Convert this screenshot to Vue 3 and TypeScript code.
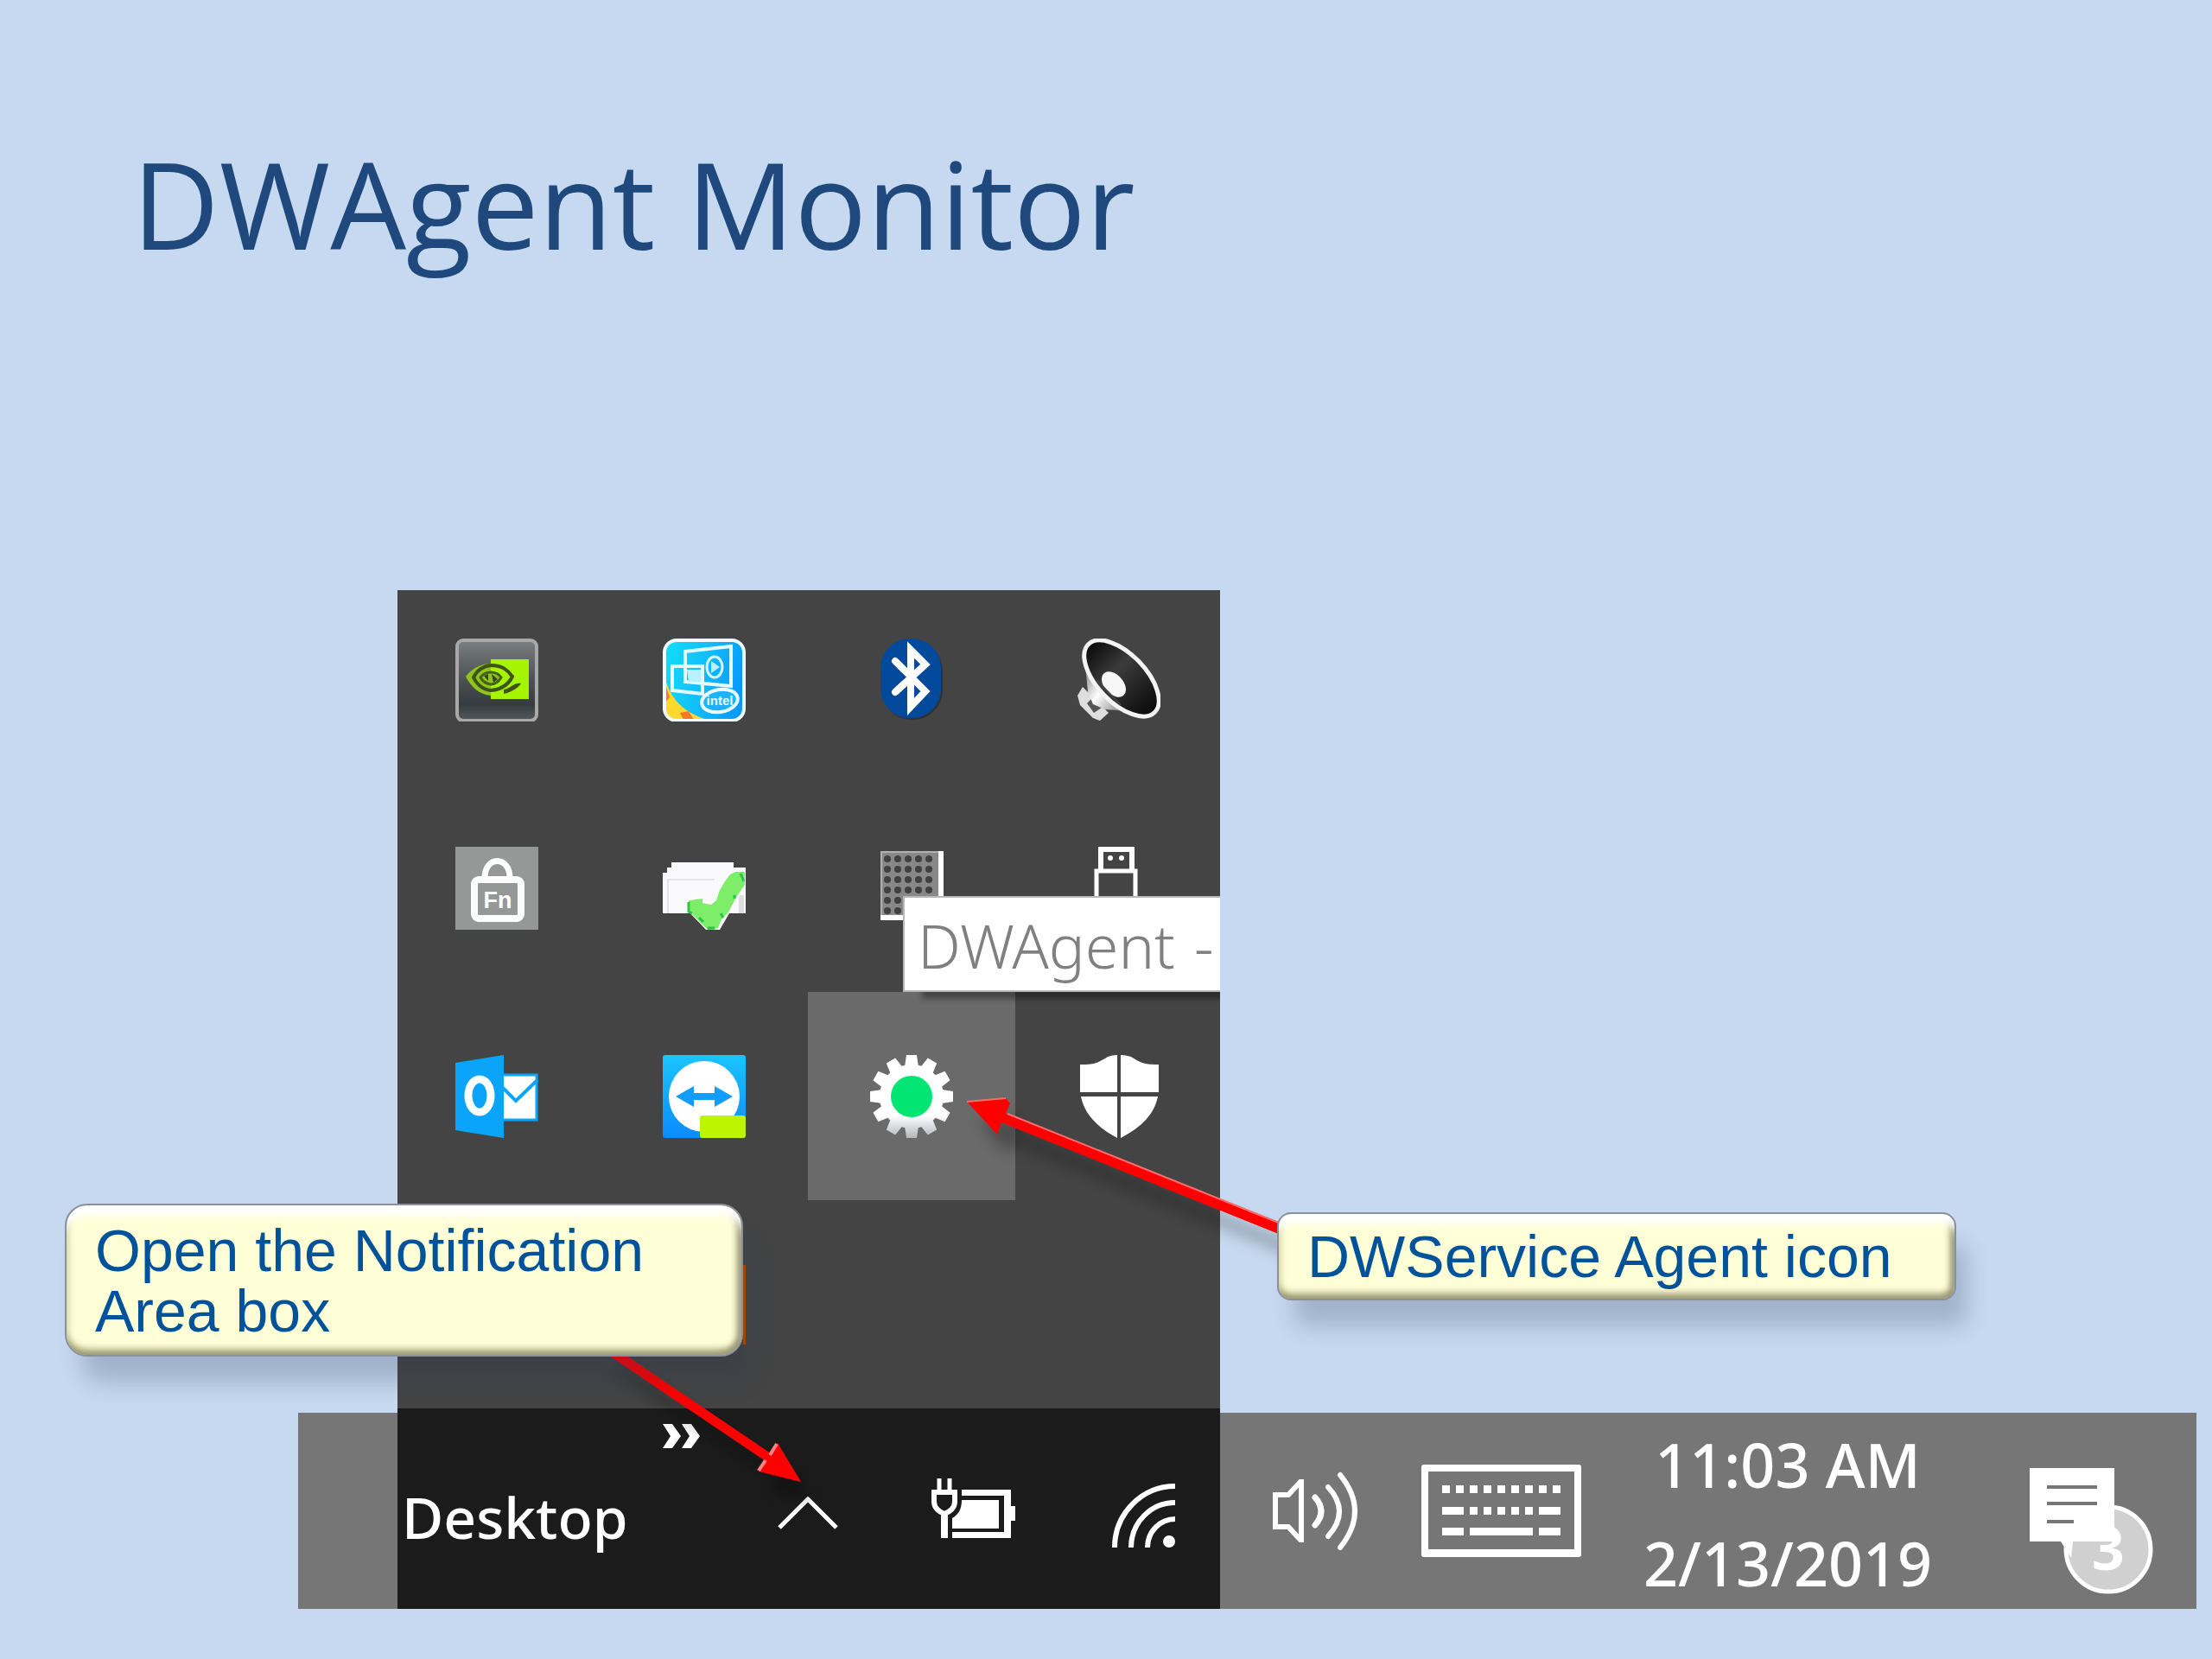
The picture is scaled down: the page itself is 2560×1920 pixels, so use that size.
<script setup lang="ts">
interface TrayItem {
  id: string
  label: string
  selected?: boolean
}

const trayItems: TrayItem[] = [
  { id: 'nvidia', label: 'NVIDIA Settings' },
  { id: 'intel', label: 'Intel Graphics' },
  { id: 'bluetooth', label: 'Bluetooth' },
  { id: 'speaker', label: 'Audio Manager' },
  { id: 'fnlock', label: 'Fn Lock' },
  { id: 'sync', label: 'Documents up to date' },
  { id: 'touchpad', label: 'Touchpad' },
  { id: 'usb', label: 'Safely Remove Hardware' },
  { id: 'outlook', label: 'Outlook' },
  { id: 'teamviewer', label: 'TeamViewer' },
  { id: 'dwagent', label: 'DWAgent', selected: true },
  { id: 'defender', label: 'Windows Defender' },
]

const gearTeeth = Array.from({ length: 12 }, (_, i) => i * 30)
const padDots = Array.from({ length: 30 }, (_, i) => ({
  x: 20 + (i % 5) * 12,
  y: 14 + Math.floor(i / 5) * 12,
}))
const keyRow = Array.from({ length: 9 }, (_, i) => 24 + i * 16)
const shortKeyRow = Array.from({ length: 5 }, (_, i) => 56 + i * 16)
</script>

<template>
  <main class="slide">
    <h1 class="title">DWAgent Monitor</h1>

    <section class="stage">
      <div class="flyout">
        <div class="tray">
          <button
            v-for="item in trayItems"
            :key="item.id"
            type="button"
            class="tray-cell"
            :class="{ selected: item.selected }"
            :aria-label="item.label"
          >
            <svg v-if="item.id === 'nvidia'" class="tray-icon" viewBox="0 0 96 96">
              <defs>
                <linearGradient id="nv" x1="0" y1="0" x2="0" y2="1">
                  <stop offset="0" stop-color="#7b7f81" />
                  <stop offset="0.5" stop-color="#4b5053" />
                  <stop offset="0.8" stop-color="#363b3f" />
                  <stop offset="1" stop-color="#555a5d" />
                </linearGradient>
              </defs>
              <rect x="2" y="2" width="92" height="93" rx="7" fill="url(#nv)" stroke="#a6a8aa" stroke-width="4" />
              <path d="M41 24H85V70H41Z" fill="#a6f500" />
              <path d="M41 29C28 29 18 36 12 44C18 56 28 65 41 66Z" fill="#8fc41a" />
              <path d="M41 31C55 31 61 37 66 44C61 54 52 59 41 60C31 59 24 52 21 45C25 37 32 32 41 31" fill="none" stroke="#3f5318" stroke-width="4" />
              <path d="M41 39C48 39 51 42 53 45C50 50 46 53 41 53C35 52 31 49 29 45C32 41 36 39 41 39Z" fill="#8fc41a" stroke="#46601a" stroke-width="3" />
              <path d="M33 43L38 41L38 49Z M42 41L49 47L44 51Z" fill="#344516" />
              <path d="M56 59C64 58 68 50 76 52C72 58 64 62 56 64Z" fill="#3f5318" />
            </svg>

            <svg v-else-if="item.id === 'intel'" class="tray-icon" viewBox="0 0 96 96">
              <defs>
                <linearGradient id="ig" x1="0" y1="0.3" x2="1" y2="0.5">
                  <stop offset="0" stop-color="#12dcf8" />
                  <stop offset="0.5" stop-color="#12bdfc" />
                  <stop offset="1" stop-color="#0898fb" />
                </linearGradient>
              </defs>
              <rect x="1" y="1" width="94" height="95" rx="14" fill="url(#ig)" />
              <path d="M2 44C8 66 20 86 56 95H14C6 94 2 90 2 82Z" fill="#ffd92e" />
              <path d="M2 50L8 68L3 74Z M20 86L30 84L36 94H24Z" fill="#f47a2a" />
              <rect x="2" y="2" width="92" height="93" rx="14" fill="none" stroke="#f2fbff" stroke-width="4" />
              <path d="M26 15L79 9V55L26 50Z M11 32H46V64L11 60Z" fill="none" stroke="#e4fbff" stroke-width="4" />
              <ellipse cx="60" cy="33" rx="9" ry="12" fill="none" stroke="#d4f6ff" stroke-width="3" />
              <path d="M56 26L66 33L56 40Z M28 36H44V50H30Z" fill="#b9f1ff" />
              <ellipse cx="66" cy="72" rx="21" ry="13" transform="rotate(-10 66 72)" fill="#19b4fb" stroke="#eafcff" stroke-width="4" />
              <text x="66" y="77" text-anchor="middle" class="intel-word">intel</text>
            </svg>

            <svg v-else-if="item.id === 'bluetooth'" class="tray-icon" viewBox="0 0 96 96">
              <rect x="14" y="3" width="70" height="91" rx="34" fill="#2f3338" />
              <rect x="12" y="0" width="70" height="92" rx="34" fill="#034a9c" />
              <path d="M29 26L64 61L47 79V13L64 30L29 62" fill="none" stroke="#fff" stroke-width="8" />
              <path d="M29 26L40 37M29 62L40 52" stroke="#fff" stroke-width="8" stroke-linecap="round" />
            </svg>

            <svg v-else-if="item.id === 'speaker'" class="tray-icon" viewBox="0 0 96 96">
              <defs>
                <linearGradient id="cone" x1="0" y1="0" x2="1" y2="0">
                  <stop offset="0" stop-color="#080808" />
                  <stop offset="0.4" stop-color="#3c3c3c" />
                  <stop offset="1" stop-color="#080808" />
                </linearGradient>
                <linearGradient id="horn" x1="0" y1="0" x2="1" y2="0.8">
                  <stop offset="0" stop-color="#777" />
                  <stop offset="0.5" stop-color="#fff" />
                  <stop offset="1" stop-color="#8a8a8a" />
                </linearGradient>
              </defs>
              <path d="M6 56L0 66L3 77L18 92L26 95L36 86Z" fill="#dedede" />
              <path d="M11 75L18 68L28 80L19 86Z" fill="#555" />
              <path d="M9 30L12 62L18 76L32 82L58 84Z" fill="url(#horn)" />
              <ellipse cx="51" cy="46" rx="55" ry="28" transform="rotate(46 51 46)" fill="url(#cone)" stroke="#f4f4f4" stroke-width="5" />
              <ellipse cx="42" cy="53" rx="17" ry="11" transform="rotate(48 42 53)" fill="#f7f7f7" />
              <path d="M22 48L50 77" stroke="#444" stroke-width="2" />
            </svg>

            <svg v-else-if="item.id === 'fnlock'" class="tray-icon" viewBox="0 0 96 96">
              <rect width="96" height="96" fill="#969897" />
              <path d="M34 36C34 10 63 10 63 36" fill="none" stroke="#fff" stroke-width="7" />
              <rect x="22" y="38" width="54" height="45" rx="5" fill="none" stroke="#fff" stroke-width="8" />
              <text x="49" y="71" text-anchor="middle" class="fn-word">Fn</text>
            </svg>

            <svg v-else-if="item.id === 'sync'" class="tray-icon" viewBox="0 0 96 96">
              <path d="M0 30H5V24H10V18H82V24H96V77H0Z" fill="#fafafc" />
              <path d="M6 77V38H60" fill="none" stroke="#e4e3e8" stroke-width="2" />
              <path d="M91 56V77" stroke="#dddde2" stroke-width="6" />
              <path d="M29 74L50 96H66L96 44V28L82 28L58 66L44 58L29 62Z" fill="#fff" />
              <path d="M30 62L46 60V65L56 67L62 62L66 50L72 40L78 32L84 29H95V44L88 54L82 64L76 76L68 84L64 94L58 96H52L44 88L30 74Z" fill="#7eee6a" />
              <path d="M30 64V75L34 77M90 31L94 40M42 82L47 87M52 94H60M67 77L70 82M83 56V60" stroke="#2fc544" stroke-width="3" fill="none" />
            </svg>

            <svg v-else-if="item.id === 'touchpad'" class="tray-icon" viewBox="0 0 96 96">
              <rect x="12" y="5" width="73" height="80" fill="#888" />
              <path d="M13 84V6H80" fill="none" stroke="#b0b0b0" stroke-width="2" />
              <path d="M82 5V82H12" fill="none" stroke="#fff" stroke-width="6" />
              <circle v-for="(dot, i) in padDots" :key="i" :cx="dot.x" :cy="dot.y" r="4" fill="#404040" />
            </svg>

            <svg v-else-if="item.id === 'usb'" class="tray-icon" viewBox="0 0 96 96">
              <path d="M27 26V3H63V26" fill="none" stroke="#fff" stroke-width="6" />
              <path d="M22 96V28H67V96" fill="none" stroke="#fff" stroke-width="5" />
              <circle cx="38" cy="13" r="3" fill="#fff" />
              <circle cx="51" cy="13" r="3" fill="#fff" />
            </svg>

            <svg v-else-if="item.id === 'outlook'" class="tray-icon" viewBox="0 0 96 96">
              <path d="M54 23H94V75H54Z" fill="#fff" stroke="#0aa5fb" stroke-width="3" />
              <path d="M54 37L70 53L95 29" fill="none" stroke="#0aa5fb" stroke-width="4" />
              <path d="M0 9L56 0V96L0 87Z" fill="#0aa5fb" />
              <ellipse cx="28" cy="47" rx="13" ry="19" fill="none" stroke="#fff" stroke-width="9" />
            </svg>

            <svg v-else-if="item.id === 'teamviewer'" class="tray-icon" viewBox="0 0 96 96">
              <defs>
                <linearGradient id="tv" x1="0" y1="0" x2="0" y2="1">
                  <stop offset="0" stop-color="#1bc4ff" />
                  <stop offset="1" stop-color="#0a8bff" />
                </linearGradient>
              </defs>
              <rect width="96" height="96" rx="3" fill="url(#tv)" />
              <circle cx="48" cy="48" r="41" fill="#fff" />
              <path d="M15 48L36 36V44H60V36L81 48L60 60V52H36V60Z" fill="#129cfb" />
              <rect x="43" y="70" width="53" height="26" rx="3" fill="#bdf400" />
            </svg>

            <svg v-else-if="item.id === 'dwagent'" class="tray-icon" viewBox="0 0 96 96">
              <defs>
                <linearGradient id="gear" gradientUnits="userSpaceOnUse" x1="0" y1="70" x2="0" y2="96">
                  <stop offset="0" stop-color="#fff" />
                  <stop offset="1" stop-color="#b4b6ba" />
                </linearGradient>
                <clipPath id="gear-shape">
                  <circle cx="48" cy="48" r="37" />
                  <path
                    v-for="angle in gearTeeth"
                    :key="angle"
                    d="M40 14L42 0H54L56 14Z"
                    :transform="`rotate(${angle} 48 48)`"
                  />
                </clipPath>
              </defs>
              <rect width="96" height="96" fill="url(#gear)" clip-path="url(#gear-shape)" />
              <circle cx="48" cy="48" r="24" fill="#02e573" />
            </svg>

            <svg v-else class="tray-icon" viewBox="0 0 96 96">
              <path d="M46 0V43H3V11C22 12 28 6 35 2Q40 0 46 0Z" fill="#fff" />
              <path d="M50 0V43H94V11C75 12 69 6 62 2Q56 0 50 0Z" fill="#fff" />
              <path d="M4 48H46V96C22 83 8 68 4 48Z" fill="#fff" />
              <path d="M93 48H50V96C75 83 89 68 93 48Z" fill="#fff" />
            </svg>

            <span v-if="item.selected" class="tooltip" role="tooltip">
              <span>DWAgent</span>
              <span>-</span>
            </span>
          </button>
        </div>
      </div>

      <div class="taskbar-back"></div>

      <div class="taskbar-front">
        <div class="toolbar">
          <button type="button" class="desktop">Desktop</button>
          <button type="button" class="more" aria-label="More">
            <svg width="44" height="30" viewBox="0 0 44 30">
              <path d="M0 1H11L21 15L11 29H0L9 15Z M22 1H33L43 15L33 29H22L31 15Z" fill="#fff" />
            </svg>
          </button>
        </div>
        <button type="button" class="bar-icon" aria-label="Show hidden icons">
          <svg width="70" height="40" viewBox="0 0 70 40">
            <path d="M2 36L35 3L68 36" fill="none" stroke="#fff" stroke-width="5" />
          </svg>
        </button>
        <button type="button" class="bar-icon battery" aria-label="Battery">
          <svg width="98" height="70" viewBox="0 0 98 70">
            <path d="M9 0V15M21 0V15" stroke="#fff" stroke-width="5" />
            <path d="M3 16H27V27C27 34 21 39 15 41C9 39 3 34 3 27Z" fill="none" stroke="#fff" stroke-width="6" />
            <path d="M15 41V69" stroke="#fff" stroke-width="8" />
            <path d="M35 13H92V32H97V49H92V69H24V62H84V20H35Z" fill="#fff" />
            <path d="M35 25H78V58H24V46C31 42 35 36 35 25Z" fill="#fff" />
          </svg>
        </button>
        <button type="button" class="bar-icon network" aria-label="Network">
          <svg width="74" height="76" viewBox="0 0 74 76">
            <path d="M3 75A70 71 0 0 1 73 4M22 75A51 52 0 0 1 73 23M41 75A32 33 0 0 1 73 42" fill="none" stroke="#fff" stroke-width="6" />
            <circle cx="66" cy="68" r="7" fill="#fff" />
          </svg>
        </button>
      </div>

      <div class="taskbar-side">
        <button type="button" class="bar-icon" aria-label="Volume">
          <svg width="100" height="94" viewBox="0 0 100 94">
            <path d="M4 28H19L33 13H34V80H33L19 65H4Z" fill="none" stroke="#fff" stroke-width="6" />
            <path d="M50 31Q64 47 50 63" fill="none" stroke="#fff" stroke-width="7" stroke-linecap="round" />
            <path d="M65 19Q91 47 65 76M79 5Q113 47 79 89" fill="none" stroke="#fff" stroke-width="6" stroke-linecap="round" />
          </svg>
        </button>
        <button type="button" class="bar-icon" aria-label="Touch keyboard">
          <svg width="185" height="107" viewBox="0 0 185 107">
            <path d="M3 0H182Q185 0 185 3V104Q185 107 182 107H3Q0 107 0 104V3Q0 0 3 0ZM8 8V98H177V8Z" fill="#fff" fill-rule="evenodd" />
            <rect v-for="x in keyRow" :key="'a' + x" :x="x" y="24" width="9" height="9" fill="#fff" />
            <rect v-for="x in shortKeyRow" :key="'b' + x" :x="x" y="49" width="9" height="9" fill="#fff" />
            <path d="M24 49H49V58H24ZM136 49H161V58H136ZM24 73H49V82H24ZM56 73H129V82H56ZM136 73H161V82H136Z" fill="#fff" />
          </svg>
        </button>
        <time class="clock" datetime="2019-02-13T11:03">
          <span>11:03 AM</span>
          <span>2/13/2019</span>
        </time>
        <button type="button" class="bar-icon alerts" aria-label="Notifications">
          <svg width="144" height="146" viewBox="0 0 144 146">
            <circle cx="91" cy="94" r="49" fill="#d0d0d0" stroke="#fff" stroke-width="5" />
            <path d="M0 0H98V68L104 74V85H50L48 104L36 85H0Z" fill="#fff" />
            <path d="M20 22H78M20 41H78M20 62H51" stroke="#767676" stroke-width="4" />
            <text x="91" y="118" text-anchor="middle" class="count">3</text>
          </svg>
        </button>
      </div>

      <svg class="arrows" viewBox="345 683 2197 1179" preserveAspectRatio="none" aria-hidden="true">
        <defs>
          <filter id="arrow-shadow" x="-10%" y="-10%" width="130%" height="140%">
            <feDropShadow dx="14" dy="24" stdDeviation="9" flood-color="#000" flood-opacity="0.3" />
          </filter>
        </defs>
        <g filter="url(#arrow-shadow)" fill="#fe0000">
          <path d="M1482 1415V1429L1159 1299L1154 1313L1119 1275L1164 1271L1169 1277L1164 1289Z" />
          <path d="M1119 1275L1164 1271M1166 1289L1482 1416" stroke="#ff6a6a" stroke-width="2" fill="none" />
        </g>
        <g filter="url(#arrow-shadow)" fill="#fe0000">
          <path d="M692 1560H712L892 1682L900 1670L927 1715L878 1703L886 1691Z" />
          <path d="M891 1684L899 1671M878 1702L886 1690" stroke="#ff8080" stroke-width="4" fill="none" />
        </g>
      </svg>

      <p class="callout callout-open">Open the Notification Area box</p>
      <p class="callout callout-agent">DWService Agent icon</p>
    </section>
  </main>
</template>

<style>
body {
  margin: 0;
  background: #c7d9f0;
}
</style>

<style scoped>
.slide {
  box-sizing: border-box;
  display: flex;
  flex-direction: column;
  min-height: 100vh;
  padding: 155px 18px 58px 345px;
  overflow: hidden;
  background: #c7d9f0;
}

.title {
  margin: 0 0 0 -192px;
  font: 400 139px/160px "Open Sans", "Noto Sans", sans-serif;
  color: #1f497d;
}

.stage {
  position: relative;
  display: grid;
  grid-template-columns: 115fr 952fr 1130fr;
  grid-template-rows: auto 5px 227px;
  margin-top: auto;
}

button {
  padding: 0;
  border: 0;
  background: none;
  color: inherit;
  font: inherit;
}

svg {
  display: block;
}

.flyout {
  grid-column: 2;
  grid-row: 1;
  overflow: hidden;
  background: #444;
}

.tray {
  display: grid;
  grid-template-columns: repeat(4, 1fr);
  grid-template-rows: repeat(4, 241px);
  margin: -17px -3px 0 -5px;
}

.tray-cell {
  position: relative;
  display: flex;
  align-items: center;
  justify-content: center;
}

.tray-cell.selected {
  z-index: 1;
  background: #6a6a6a;
}

.tray-icon {
  width: 96px;
  height: 96px;
}

.intel-word {
  font: 700 15px "Liberation Sans", sans-serif;
  fill: #eafcff;
}

.fn-word {
  font: 700 27px "Liberation Sans", sans-serif;
  fill: #fff;
}

.tooltip {
  position: absolute;
  bottom: 100%;
  left: 110px;
  box-sizing: border-box;
  display: flex;
  gap: 22px;
  width: 400px;
  height: 111px;
  padding-left: 15px;
  border: 2px solid #b8b8b8;
  background: #fff;
  box-shadow: 22px 8px 6px rgba(0, 0, 0, 0.35);
  color: #808080;
  font: 300 70px/111px "Noto Sans", "Open Sans", sans-serif;
  white-space: nowrap;
}

.taskbar-back {
  grid-column: 1 / -1;
  grid-row: 3;
  background: #767676;
}

.taskbar-front {
  grid-column: 2;
  grid-row: 2 / 4;
  display: grid;
  grid-template-columns: 379fr 192fr 192fr 189fr;
  background: #1b1b1b;
  color: #fff;
}

.toolbar {
  display: flex;
  justify-content: space-between;
  padding: 17px 28px 0 5px;
}

.desktop {
  font: 500 66px/94px "Noto Sans", "Open Sans", sans-serif;
}

.more {
  align-self: flex-start;
}

.bar-icon {
  display: flex;
  align-items: center;
  justify-content: center;
}

.taskbar-front .bar-icon {
  padding-top: 12px;
}

.taskbar-front .battery {
  padding-top: 0;
}

.taskbar-front .network {
  padding: 16px 0 0 12px;
}

.taskbar-side {
  grid-column: 3;
  grid-row: 3;
  display: grid;
  grid-template-columns: 220fr 210fr 454fr 246fr;
  grid-template-rows: minmax(0, 1fr);
  color: #fff;
}

.clock {
  display: flex;
  flex-direction: column;
  justify-content: center;
  padding-top: 6px;
  font: 500 70px/114px "Noto Sans", "Open Sans", sans-serif;
  text-align: center;
}

.taskbar-side .alerts {
  padding: 46px 0 0 4px;
}

.count {
  font: 700 66px "Noto Sans", sans-serif;
  fill: #fff;
}

.arrows {
  position: absolute;
  z-index: 2;
  inset: 0;
  width: 100%;
  height: 100%;
  overflow: visible;
  pointer-events: none;
}

.callout {
  position: absolute;
  z-index: 3;
  box-sizing: border-box;
  margin: 0;
  padding: 16px 32px 16px 33px;
  border: 2px solid #8b9099;
  background: #ffffd7;
  color: #00529b;
  font: 400 68px/70px "Liberation Sans", sans-serif;
  box-shadow:
    inset 0 16px 10px -4px #fff,
    inset 0 -10px 8px -4px #9d9a74,
    inset -6px 0 8px -2px #77755a,
    inset 6px 0 6px -2px #e2e1b4,
    16px 34px 26px -4px rgba(40, 60, 85, 0.24);
}

.callout-open {
  top: 710px;
  left: -270px;
  width: 785px;
  padding-block: 17px 16px;
  border-radius: 26px;
}

.callout-open::after {
  content: "";
  position: absolute;
  right: -5px;
  bottom: 12px;
  width: 3px;
  height: 92px;
  background: #9a4a08;
}

.callout-agent {
  top: 720px;
  left: 1133px;
  width: 786px;
  padding-block: 14px;
  border-radius: 16px;
}
</style>
